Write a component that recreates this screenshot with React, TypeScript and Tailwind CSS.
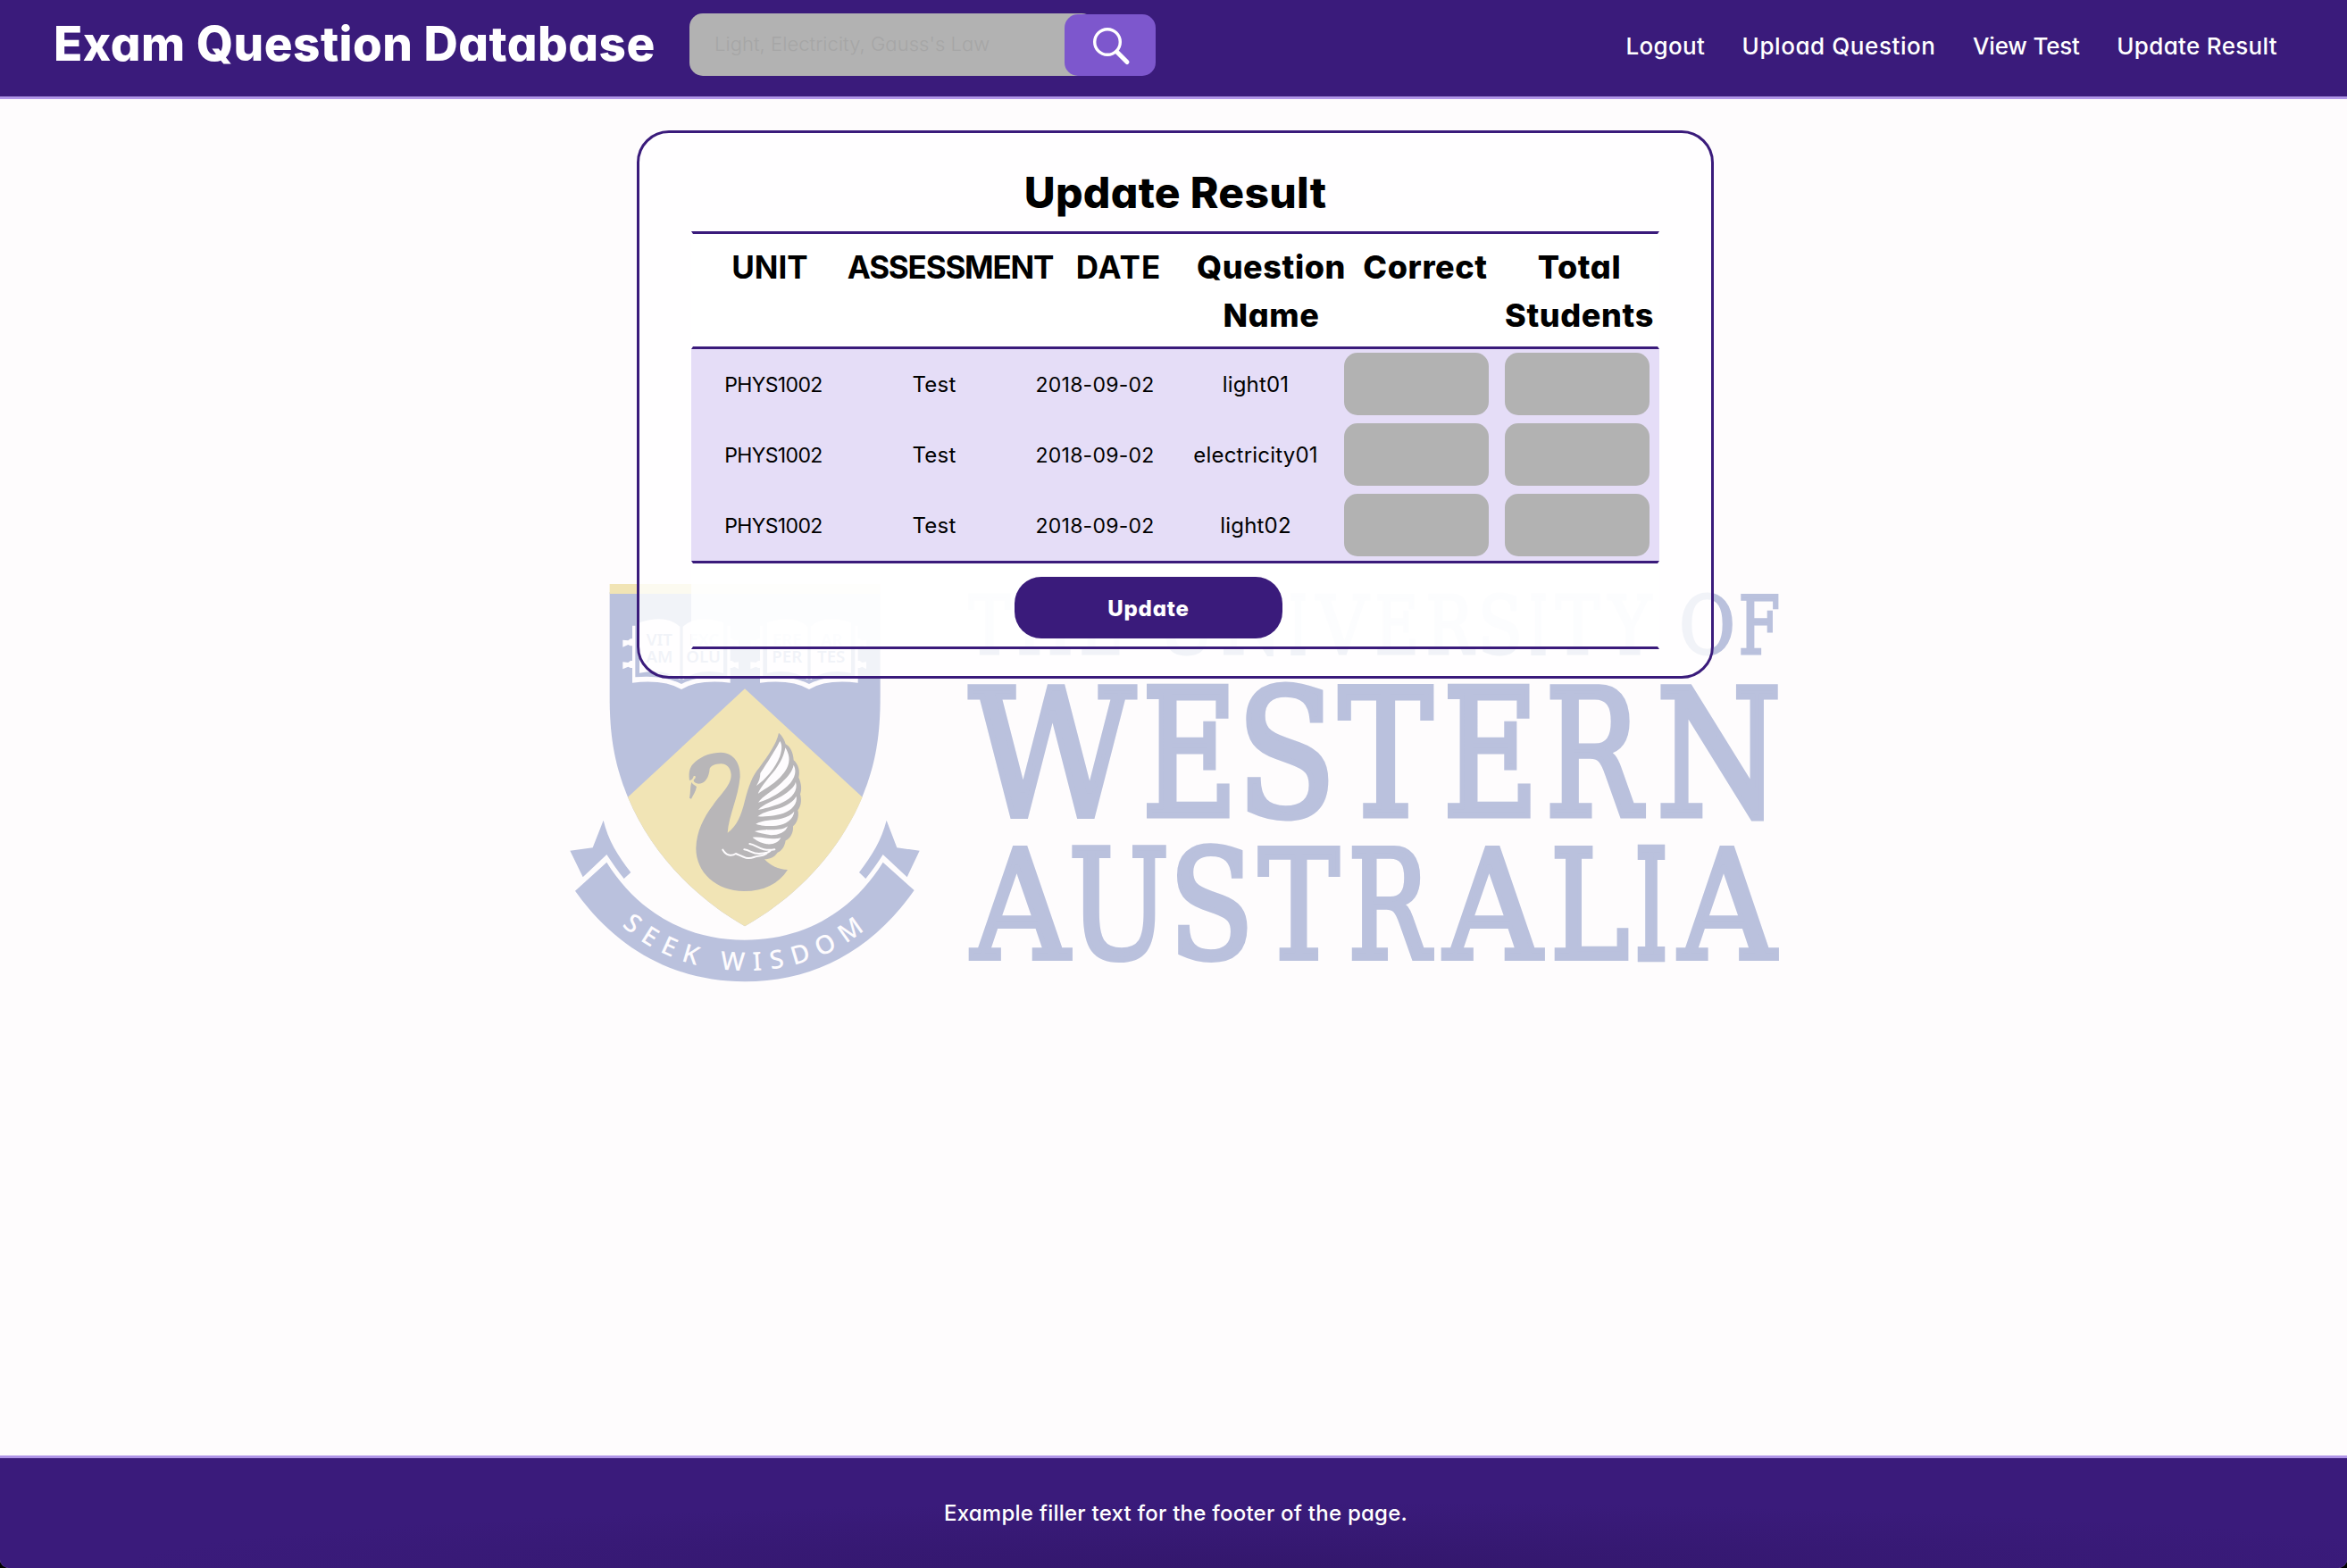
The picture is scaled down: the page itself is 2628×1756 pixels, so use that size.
const navLinks = [
  { label: "Logout", tracking: "tracking-[0.33px]" },
  { label: "Upload Question", tracking: "tracking-[0.58px]" },
  { label: "View Test", tracking: "tracking-[-0.19px]" },
  { label: "Update Result", tracking: "tracking-[0.33px]" },
];

const columns = [
  { label: "UNIT", className: "w-[172px] text-[35px]" },
  { label: "ASSESSMENT", className: "w-[232px] text-[35px] tracking-[-1.19px]" },
  { label: "DATE", className: "w-[142px] pl-[3px] text-[35px] tracking-[1px]" },
  { label: "Question Name", className: "w-[200px] pl-[3px] text-[36px] font-extrabold tracking-[0.6px]" },
  { label: "Correct", className: "w-[146px] pl-[2px] text-[36px] font-extrabold tracking-[0.6px]" },
  { label: "Total Students", className: "w-[188px] pl-[13px] text-[36px] font-extrabold tracking-[0.6px]" },
];

const rows = [
  { unit: "PHYS1002", assessment: "Test", date: "2018-09-02", question: "light01" },
  { unit: "PHYS1002", assessment: "Test", date: "2018-09-02", question: "electricity01" },
  { unit: "PHYS1002", assessment: "Test", date: "2018-09-02", question: "light02" },
];

/* Advance, left bearing and ink width of DejaVu Serif capitals, in em. */
const metrics: Record<string, [number, number, number]> = {
  W: [1.028, 0.01, 1.008],
  E: [0.73, 0.055, 0.612],
  S: [0.685, 0.08, 0.545],
  T: [0.667, 0.01, 0.647],
  R: [0.753, 0.055, 0.715],
  N: [0.875, 0.05, 0.785],
  A: [0.722, -0.008, 0.738],
  U: [0.843, 0.045, 0.754],
  L: [0.664, 0.055, 0.582],
  I: [0.395, 0.055, 0.285],
  H: [0.872, 0.055, 0.762],
  V: [0.722, -0.008, 0.738],
  Y: [0.66, -0.01, 0.68],
  O: [0.82, 0.056, 0.708],
  F: [0.694, 0.055, 0.6],
};

type Glyph = [string, number, number];

const theUniversityOf: Glyph[] = [
  ["T", 1084, 1132], ["H", 1141, 1199], ["E", 1211, 1255],
  ["U", 1297, 1360], ["N", 1370, 1434], ["I", 1445, 1462], ["V", 1472, 1534],
  ["E", 1542, 1586], ["R", 1599, 1652], ["S", 1659, 1702], ["I", 1714, 1731],
  ["T", 1741, 1792], ["Y", 1799, 1851], ["O", 1883, 1940], ["F", 1949, 1992],
];
const western: Glyph[] = [
  ["W", 1084, 1272.5], ["E", 1283, 1380], ["S", 1394, 1490], ["T", 1497, 1606],
  ["E", 1620, 1717], ["R", 1734.5, 1843], ["N", 1859, 1992],
];
const australia: Glyph[] = [
  ["A", 1084, 1201], ["U", 1199.5, 1306.5], ["S", 1317, 1399], ["T", 1407.5, 1501],
  ["R", 1513, 1606], ["A", 1613, 1730], ["L", 1740, 1823.5], ["I", 1833, 1865],
  ["A", 1876, 1992],
];

function Wordmark({ glyphs, top, bottom, weight }: { glyphs: Glyph[]; top: number; bottom: number; weight: number }) {
  const size = (bottom - top - weight) / 0.729;
  return (
    <text
      y={bottom - weight / 2}
      fontFamily="'DejaVu Serif', serif"
      fontSize={size}
      fill="#bac1dd"
      stroke="#bac1dd"
      strokeWidth={weight}
      strokeLinejoin="miter"
      strokeMiterlimit={2}
    >
      {glyphs.map(([ch, left, right], i) => {
        const [advance, bearing, ink] = metrics[ch];
        const k = (right - left - weight) / ink;
        return (
          <tspan
            key={i}
            x={left + weight / 2 - bearing * k}
            textLength={advance * k}
            lengthAdjust="spacingAndGlyphs"
            strokeWidth={ch === "I" ? weight * 1.4 : weight}
          >
            {ch}
          </tspan>
        );
      })}
    </text>
  );
}

function Book({ words }: { words: [string, string, string, string] }) {
  return (
    <g>
      <path
        fill="#fefcfe"
        d="M264 212H274V385Q365 376 429 408Q490 376 583 385V212H593V404Q485 392 429 426Q370 392 264 404Z"
      />
      <path fill="#fefcfe" d="M288 202Q375 172 424 215V394Q370 354 288 371Z" />
      <path fill="#fefcfe" d="M434 215Q483 172 570 202V371Q488 354 434 394Z" />
      <path
        fill="#fefcfe"
        d="M232 260L250 262L258 256H266V280H258L250 276L232 284ZM232 334L250 336L258 330H266V354H258L250 350L232 358ZM621 260L607 262L599 256H591V280H599L607 276L621 284ZM621 334L607 336L599 330H591V354H599L607 350L621 358Z"
      />
      <g fill="#bac1dd" fontFamily="'Noto Sans', sans-serif" fontSize="56" fontWeight="600" textAnchor="middle">
        <text x="355" y="279">{words[0]}</text>
        <text x="355" y="335">{words[1]}</text>
        <text x="505" y="279">{words[2]}</text>
        <text x="503" y="335">{words[3]}</text>
      </g>
    </g>
  );
}

function Crest() {
  return (
    <g transform="translate(620 630) scale(0.33333)">
      <path fill="#bac1dd" d="M188 100H1097V450C1097 570 1085 670 1036 788C960 970 820 1120 642 1222C465 1120 325 970 249 788C200 670 188 570 188 450Z" />
      <path fill="#f1e4b5" d="M188 72H1097V105H188Z" />
      <path fill="#f1e4b5" d="M642 424L1037 788C960 970 820 1120 642 1222C465 1120 325 970 249 788Z" />
      <Book words={["VIT", "AM", "EXC", "OLU"]} />
      <g transform="translate(429 0)">
        <Book words={["ERE", "PER", "AR", "TES"]} />
      </g>

      <path
        fill="#b8b6b8"
        d="M456 732C452 700 458 685 475 670C500 648 530 638 562 638C608 640 628 678 626 720C620 790 588 850 584 908C615 885 630 850 642 800C655 750 668 715 690 690C722 645 748 610 756 572C768 582 776 597 779 610C795 618 805 640 806 664C822 678 828 700 823 722C832 742 834 762 828 778C834 800 830 820 820 832C826 855 815 878 804 886C806 910 792 930 779 934C776 955 765 970 752 974C742 990 725 996 708 997C728 1018 755 1032 786 1032C755 1080 705 1104 640 1104C545 1104 478 1040 478 960C480 900 505 855 535 815C570 768 597 745 596 712C594 688 580 676 562 676C540 676 528 685 524 692C522 720 510 742 488 743C474 742 466 734 472 728C480 722 476 714 470 718C468 726 464 732 456 732Z"
      />
      <path fill="#b8b6b8" d="M463 738C466 745 474 748 480 753C478 768 468 782 462 794L456 791C460 772 458 752 463 738Z" />
      <g fill="#fefcfe">
        <path d="M760 600C742 635 706 690 694 708C694 722 690 735 681 750C712 728 745 690 760 650C767 630 768 612 760 600Z" />
        <path d="M778 622C774 645 765 668 745 695C725 720 695 752 686 777C700 765 735 748 760 722C790 692 802 660 778 622Z" />
        <path d="M806 680C802 700 790 716 765 740C740 765 700 785 687 806C705 802 738 788 768 765C800 742 822 710 806 680Z" />
        <path d="M813 737C808 755 792 768 765 785C740 800 705 810 687 831C702 827 738 820 768 806C800 792 822 765 813 737Z" />
        <path d="M815 785C808 798 795 810 768 822C740 832 705 836 685 853C702 854 742 852 772 842C800 832 820 810 815 785Z" />
        <path d="M808 836C800 847 785 855 765 860C740 866 700 864 679 878C692 883 718 887 748 884C780 880 806 862 808 836Z" />
        <path d="M786 886C778 892 768 896 748 897C728 899 700 896 675 903C688 908 705 912 730 916C756 916 780 906 786 886Z" />
        <path d="M763 924C755 927 748 928 735 928C718 928 695 920 668 923C678 932 695 942 716 946C738 948 756 940 763 924Z" />
      </g>
      <path
        fill="none"
        stroke="#fefcfe"
        strokeWidth="6"
        strokeLinecap="round"
        d="M568 965C580 985 597 988 612 978C628 984 648 1000 672 990C690 983 700 988 715 978M640 964C660 966 665 978 690 978C705 974 715 980 728 968M658 945C682 948 695 972 742 964"
      />

      <path fill="#bac1dd" d="M55 968L131 958L167 866C182 930 215 985 259 1041L236 1062C214 1035 196 1008 178 981L98 1057Z" />
      <path fill="#bac1dd" d="M1229 968L1153 958L1118 866C1102 930 1069 985 1026 1041L1048 1062C1070 1035 1089 1008 1106 981L1187 1057Z" />
      <path
        fill="#bac1dd"
        d="M72 1103L178 1007C280 1170 440 1268 642 1268C845 1268 1005 1170 1106 1007L1211 1101C1065 1310 865 1408 642 1408C420 1408 218 1310 72 1103Z"
      />
      <path id="motto" fill="none" d="M228 1220C345 1325 485 1371 642 1371C800 1371 940 1325 1062 1220" />
      <text fill="#fefcfe" fontFamily="'Noto Sans', sans-serif" fontSize="86" fontWeight="500">
        <textPath href="#motto" textLength="885" lengthAdjust="spacing">
          SEEK WISDOM
        </textPath>
      </text>
    </g>
  );
}

function UniversityWatermark() {
  return (
    <svg className="absolute top-[630px] left-[620px] h-[480px] w-[1400px]" viewBox="620 630 1400 480" aria-hidden="true">
      <Crest />
      <Wordmark glyphs={theUniversityOf} top={665} bottom={733.7} weight={3} />
      <Wordmark glyphs={western} top={765.5} bottom={916.3} weight={7} />
      <Wordmark glyphs={australia} top={947} bottom={1076.3} weight={6} />
    </svg>
  );
}

function Header() {
  return (
    <header className="flex h-[111px] items-start border-b-3 border-[#b095e8] bg-[#3a1b7b] pr-[78px] pl-[60px] text-white">
      <h1 className="w-[674px] text-[53px] leading-[98px] font-extrabold tracking-[0.47px] whitespace-nowrap">
        Exam Question Database
      </h1>
      <form className="ml-[38px] flex items-start pt-[15px]">
        <input
          type="text"
          placeholder="Light, Electricity, Gauss's Law"
          className="h-[70px] w-[454px] rounded-[15px] bg-[#b2b2b2] pb-[2px] pl-[28px] text-[22px] font-light tracking-[0.05px] text-black outline-none placeholder:text-[#a6a6a6]"
        />
        <button type="button" aria-label="Search" className="relative mt-px -ml-[34px] h-[69px] w-[102px] rounded-[15px] bg-[#7d57cd]">
          <svg className="h-full w-full" viewBox="0 0 102 69" fill="none" stroke="#fff" strokeLinecap="round">
            <circle cx="48" cy="31" r="14.3" strokeWidth="3.4" />
            <path d="M58.5 42L70 53.5" strokeWidth="5" />
          </svg>
        </button>
      </form>
      <nav className="ml-auto flex gap-[41.5px] text-[26px] leading-[103px] font-medium whitespace-nowrap">
        {navLinks.map((link) => (
          <a key={link.label} href="#" className={link.tracking}>
            {link.label}
          </a>
        ))}
      </nav>
    </header>
  );
}

function ResultCard() {
  return (
    <main className="relative mt-[35px] ml-[713px] h-[614px] w-[1206px] rounded-[36px] border-3 border-[#3a1b7b] bg-white/80 pt-6 pr-[58px] pl-[58px] text-black">
      <h2 className="text-center text-[48px] leading-[86px] font-extrabold tracking-[0.3px]">Update Result</h2>
      <div className="flex h-[132px] w-[1084px] border-x-2 border-y-3 border-x-transparent border-y-[#3a1b7b] bg-white/80 pt-[10px] leading-[54px] font-bold">
        {columns.map((col) => (
          <div key={col.label} className={`shrink-0 text-center ${col.className}`}>
            {col.label}
          </div>
        ))}
      </div>
      <div className="w-[1084px] bg-[#e5ddf7] px-[2px]">
        {rows.map((row) => (
          <div key={row.question} className="grid h-[79px] grid-cols-6 text-center text-[24px] leading-[80px]">
            <div className="text-[23px] tracking-[-0.65px]">{row.unit}</div>
            <div className="tracking-[0.2px]">{row.assessment}</div>
            <div className="text-[23px] tracking-[0.23px]">{row.date}</div>
            <div className="tracking-[0.2px]">{row.question}</div>
            <input aria-label="Correct" className="mx-[9px] mt-1 h-[70px] min-w-0 rounded-[15px] bg-[#b2b2b2] px-4 outline-none" />
            <input aria-label="Total students" className="mx-[9px] mt-1 h-[70px] min-w-0 rounded-[15px] bg-[#b2b2b2] px-4 outline-none" />
          </div>
        ))}
      </div>
      <div className="h-[99px] w-[1084px] border-x-2 border-y-3 border-x-transparent border-y-[#3a1b7b] bg-white/80 pt-[15px] pl-[360px]">
        <button
          type="button"
          className="block h-[69px] w-[300px] rounded-[30px] bg-[#3a1b7b] pt-[2px] text-[24px] font-extrabold tracking-[0.8px] text-white"
        >
          Update
        </button>
      </div>
    </main>
  );
}

export default function App() {
  return (
    <div className="h-[1756px] w-[2628px] bg-black">
      <div className="relative flex h-full flex-col overflow-hidden rounded-b-[10px] bg-[#fefcfd] font-[Inter,sans-serif] [font-feature-settings:'cv11']">
        <UniversityWatermark />
        <Header />
        <ResultCard />
        <footer className="mt-auto flex h-[126px] items-center justify-center border-t-3 border-[#b095e8] bg-[#3a1b7b] bg-[radial-gradient(ellipse_50%_60%_at_55%_100%,#33176c,#3a1b7b)] pt-px pl-[5px] text-[24px] font-medium tracking-[0.24px] text-white">
          Example filler text for the footer of the page.
        </footer>
      </div>
    </div>
  );
}
